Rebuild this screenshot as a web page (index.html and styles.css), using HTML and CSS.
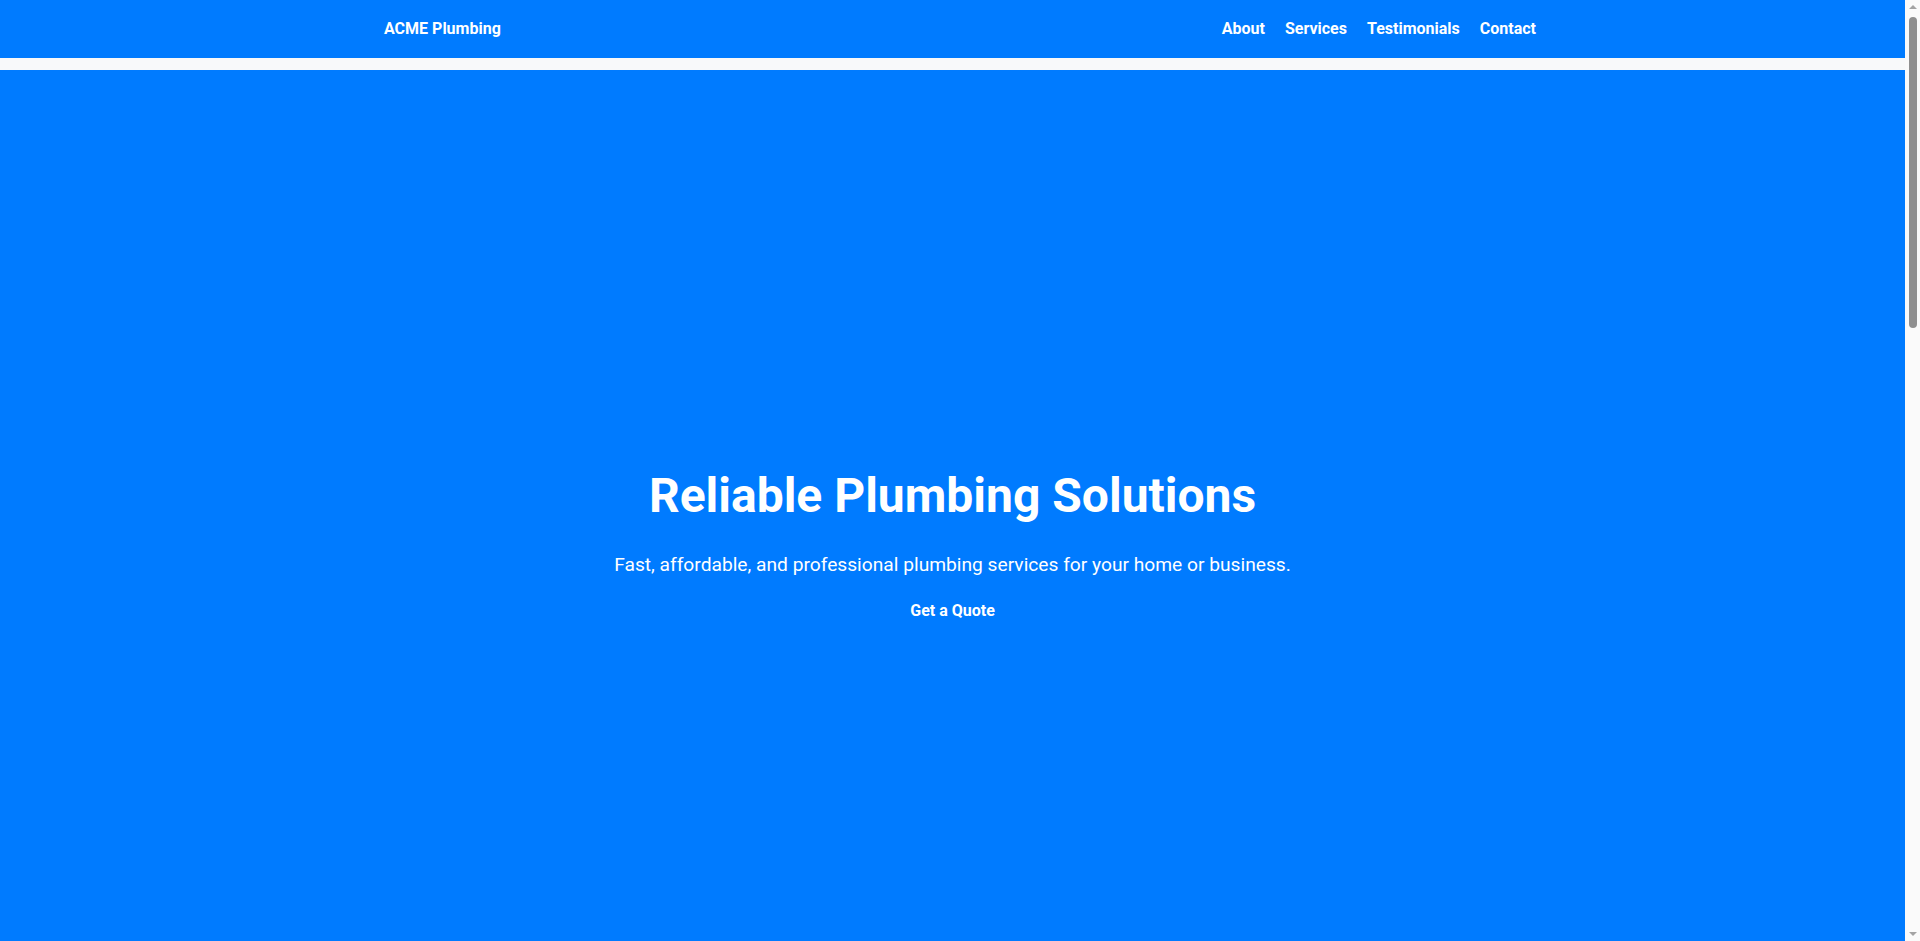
FILE: index.html
```html
<!DOCTYPE html>
<html lang="en">
<head>
<meta charset="utf-8">
<title>ACME Plumbing</title>
<link rel="stylesheet" href="styles.css">
</head>
<body>
<header class="site-header">
  <div class="brand">ACME Plumbing</div>
  <nav class="nav">
    <a href="#about">About</a>
    <a href="#services">Services</a>
    <a href="#testimonials">Testimonials</a>
    <a href="#contact">Contact</a>
  </nav>
</header>
<main class="main">
  <section class="hero">
    <h1 class="hero-title">Reliable Plumbing Solutions</h1>
    <p class="hero-sub">Fast, affordable, and professional plumbing services for your home or business.</p>
    <a class="hero-btn" href="#contact">Get a Quote</a>
  </section>
</main>
<div class="scrollbar" aria-hidden="true">
  <span class="sb-arrow sb-up"></span>
  <span class="sb-track"><span class="sb-thumb"></span></span>
  <span class="sb-arrow sb-down"></span>
</div>
</body>
</html>
```

FILE: styles.css
```css
html, body {
  margin: 0;
  padding: 0;
  height: 100%;
  overflow: hidden;
}
body {
  font-family: Roboto, "Liberation Sans", Arial, sans-serif;
  background: #f8f9fa;
  color: #333;
}
.site-header {
  box-sizing: border-box;
  height: 58px;
  padding: 0 20vw 2px;
  background: #007bff;
  color: #fff;
  display: flex;
  align-items: center;
  justify-content: space-between;
  margin-bottom: 12px;
}
.brand {
  font-size: 16px;
  font-weight: 700;
}
.nav {
  display: flex;
  gap: 20px;
}
.nav a {
  color: #fff;
  text-decoration: none;
  font-weight: 700;
  font-size: 16px;
}
.main {
  margin-right: 15px;
}
.hero {
  box-sizing: border-box;
  height: calc(100vh - 70px);
  padding-top: 79px;
  background: #007bff;
  color: #fff;
  display: flex;
  flex-direction: column;
  align-items: center;
  justify-content: center;
  text-align: center;
}
.hero-title {
  font-size: 48px;
  line-height: 1.2;
  font-weight: 700;
  margin: 0 0 27px;
}
.hero-sub {
  font-size: 19.2px;
  line-height: 1.5;
  margin: 0 0 19px;
}
.hero-btn {
  color: #fff;
  text-decoration: none;
  font-weight: 700;
  font-size: 16px;
  line-height: 24px;
}

/* imitation of the browser's vertical scrollbar */
.scrollbar {
  position: fixed;
  top: 0;
  right: 0;
  bottom: 0;
  width: 15px;
  background: #fafafa;
  display: flex;
  flex-direction: column;
  align-items: center;
}
.sb-arrow {
  display: block;
  width: 0;
  height: 0;
  flex: 0 0 auto;
  margin: 5px 0;
  border-left: 4px solid transparent;
  border-right: 4px solid transparent;
}
.sb-up {
  border-bottom: 4px solid #a3a3a3;
}
.sb-down {
  border-top: 4px solid #a3a3a3;
}
.sb-track {
  flex: 1;
  width: 100%;
  display: flex;
  justify-content: center;
  padding-top: 3px;
}
.sb-thumb {
  width: 8px;
  height: 311px;
  border-radius: 4px;
  background: #8f8f8f;
}
```
